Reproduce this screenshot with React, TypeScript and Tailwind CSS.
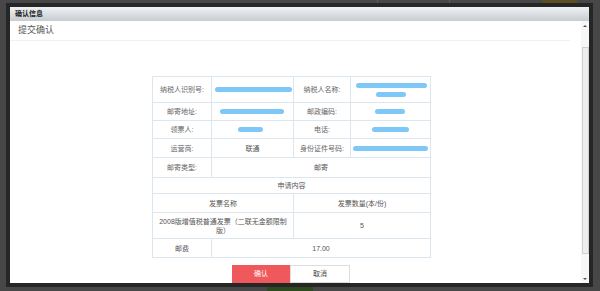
import React from 'react';

const font = { fontFamily: '"Liberation Sans", "Noto Sans CJK SC", sans-serif' };

function Bar({ w, ml }: { w: string; ml: string }) {
  return <span className={`block h-[5px] rounded-full bg-[#7ec8f7] ${w} ${ml}`} />;
}

export default function App() {
  const cell = 'border border-[#dce6ee] text-center align-middle p-0';
  const label = `${cell} text-[#666]`;
  const value = `${cell} text-[#555]`;

  return (
    <div className="w-[600px] h-[291px] bg-[#474747] overflow-hidden flex flex-col" style={font}>
      {/* page peeking out above the overlay */}
      <div className="h-[3px] flex shrink-0">
        <div className="w-[377px]" />
        <div className="w-[73px] border-x border-[#5a5a5a]" />
        <div className="w-[92px]" />
        <div className="w-[35px] bg-[#5c4d22]" />
      </div>

      <div className="ml-[6px] w-[587px] h-[284px] border-4 border-[#262626] flex flex-col shrink-0">
        <div className="h-[14px] bg-gradient-to-b from-[#eff2f5] to-[#c7ccd1] flex items-center pl-[5px] text-[7px] font-bold text-[#222] shrink-0">
          确认信息
        </div>

        <div className="flex-1 flex bg-white overflow-hidden">
          <div className="flex-1 flex flex-col overflow-hidden">
            <div className="h-[20px] mr-[11px] border-b border-[#f0f0f0] pl-[8px] flex items-center text-[9px] text-[#555] shrink-0">
              提交确认
            </div>

            <table className="ml-[142px] mt-[35px] w-[278px] border-collapse text-[7px] leading-[9px] table-fixed">
              <colgroup>
                <col className="w-[59px]" />
                <col className="w-[82px]" />
                <col className="w-[57px]" />
                <col className="w-[80px]" />
              </colgroup>
              <tbody>
                <tr className="h-[26px]">
                  <td className={label}>纳税人识别号:</td>
                  <td className={value}><Bar w="w-[77px]" ml="ml-[3px]" /></td>
                  <td className={label}>纳税人名称:</td>
                  <td className={value}>
                    <Bar w="w-[71px]" ml="ml-[5px]" />
                    <Bar w="w-[30px]" ml="ml-[25px] mt-[4px]" />
                  </td>
                </tr>
                <tr className="h-[18px]">
                  <td className={label}>邮寄地址:</td>
                  <td className={value}><Bar w="w-[64px]" ml="ml-[8px]" /></td>
                  <td className={label}>邮政编码:</td>
                  <td className={value}><Bar w="w-[30px]" ml="ml-[24px]" /></td>
                </tr>
                <tr className="h-[18px]">
                  <td className={label}>领票人:</td>
                  <td className={value}><Bar w="w-[25px]" ml="ml-[26px]" /></td>
                  <td className={label}>电话:</td>
                  <td className={value}><Bar w="w-[37px]" ml="ml-[21px]" /></td>
                </tr>
                <tr className="h-[19px]">
                  <td className={label}>运营商:</td>
                  <td className={value}>联通</td>
                  <td className={label}>身份证件号码:</td>
                  <td className={value}><Bar w="w-[75px]" ml="ml-[2px]" /></td>
                </tr>
                <tr className="h-[20px]">
                  <td className={label}>邮寄类型:</td>
                  <td className={value} colSpan={3}>邮寄</td>
                </tr>
                <tr className="h-[16px]">
                  <td className={value} colSpan={4}>申请内容</td>
                </tr>
                <tr className="h-[19px]">
                  <td className={value} colSpan={2}>发票名称</td>
                  <td className={value} colSpan={2}>发票数量(本/份)</td>
                </tr>
                <tr className="h-[26px]">
                  <td className={`${value} px-[3px]`} colSpan={2}>2008版增值税普通发票（二联无金额限制版）</td>
                  <td className={value} colSpan={2}>5</td>
                </tr>
                <tr className="h-[19px]">
                  <td className={value}>邮费</td>
                  <td className={value} colSpan={3}>17.00</td>
                </tr>
              </tbody>
            </table>

            <div className="flex ml-[222px] mt-[7px] shrink-0">
              <button className="w-[58px] h-[18px] bg-[#f0595b] text-white text-[7px]">确认</button>
              <button className="w-[60px] h-[18px] bg-white border border-[#dddddd] text-[#444] text-[7px]">取消</button>
            </div>
          </div>

          <div className="w-[8px] bg-[#f7f7f7] flex flex-col items-center shrink-0">
            <div className="h-[9px] flex items-center justify-center">
              <span className="block w-0 h-0 border-x-[2px] border-x-transparent border-b-[2px] border-b-[#555]" />
            </div>
            <div className="mt-[17px] w-[7px] h-[207px] bg-[#ededed] border border-[#cfcfcf]" />
            <div className="flex-1" />
            <div className="h-[9px] flex items-center justify-center">
              <span className="block w-0 h-0 border-x-[2px] border-x-transparent border-t-[2px] border-t-[#555]" />
            </div>
          </div>
        </div>
      </div>

      <div className="flex h-[4px] shrink-0">
        <div className="w-[267px]" />
        <div className="w-[46px] bg-[#2c4a1e]" />
      </div>
    </div>
  );
}
